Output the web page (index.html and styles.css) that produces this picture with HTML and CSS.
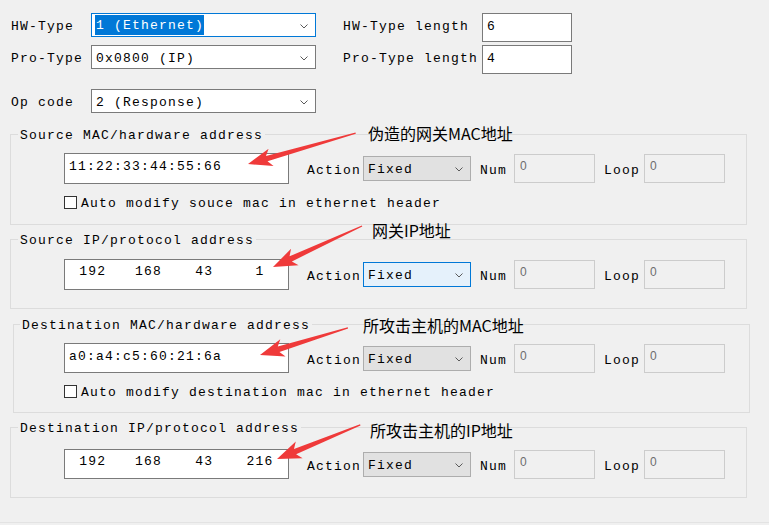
FILE: index.html
```html
<!DOCTYPE html>
<html>
<head>
<meta charset="utf-8">
<link rel="stylesheet" href="styles.css">
</head>
<body>
<div class="top">
  <div class="row">
    <span class="lbl lbl-a">HW-Type</span>
    <div class="combo focus"><span class="hl">1 (Ethernet)</span><svg class="chev" width="8" height="5" viewBox="0 0 8 5"><polyline points="0.5,0.5 4,4 7.5,0.5"/></svg></div>
    <span class="lbl lbl-b">HW-Type length</span>
    <div class="edit len">6</div>
  </div>
  <div class="row">
    <span class="lbl lbl-a">Pro-Type</span>
    <div class="combo"><span>0x0800 (IP)</span><svg class="chev" width="8" height="5" viewBox="0 0 8 5"><polyline points="0.5,0.5 4,4 7.5,0.5"/></svg></div>
    <span class="lbl lbl-b">Pro-Type length</span>
    <div class="edit len">4</div>
  </div>
  <div class="row op">
    <span class="lbl lbl-a">Op code</span>
    <div class="combo"><span>2 (Response)</span><svg class="chev" width="8" height="5" viewBox="0 0 8 5"><polyline points="0.5,0.5 4,4 7.5,0.5"/></svg></div>
  </div>
</div>

<fieldset class="grp g1">
  <legend>Source MAC/hardware address</legend>
  <div class="line">
    <div class="edit addr">11:22:33:44:55:66</div>
    <span class="act-l">Action</span>
    <div class="combo act"><span>Fixed</span><svg class="chev" width="8" height="5" viewBox="0 0 8 5"><polyline points="0.5,0.5 4,4 7.5,0.5"/></svg></div>
    <span class="num-l">Num</span>
    <div class="edit dis num">0</div>
    <span class="loop-l">Loop</span>
    <div class="edit dis loop">0</div>
  </div>
  <div class="chk"><span class="box"></span><span class="chk-t">Auto modify souce mac in ethernet header</span></div>
</fieldset>

<fieldset class="grp g2">
  <legend>Source IP/protocol address</legend>
  <div class="line">
    <div class="edit addr ip"><span>192</span><span>168</span><span>43</span><span>1</span></div>
    <span class="act-l">Action</span>
    <div class="combo act focus"><span>Fixed</span><svg class="chev" width="8" height="5" viewBox="0 0 8 5"><polyline points="0.5,0.5 4,4 7.5,0.5"/></svg></div>
    <span class="num-l">Num</span>
    <div class="edit dis num">0</div>
    <span class="loop-l">Loop</span>
    <div class="edit dis loop">0</div>
  </div>
</fieldset>

<fieldset class="grp g3">
  <legend>Destination MAC/hardware address</legend>
  <div class="line">
    <div class="edit addr">a0:a4:c5:60:21:6a</div>
    <span class="act-l">Action</span>
    <div class="combo act"><span>Fixed</span><svg class="chev" width="8" height="5" viewBox="0 0 8 5"><polyline points="0.5,0.5 4,4 7.5,0.5"/></svg></div>
    <span class="num-l">Num</span>
    <div class="edit dis num">0</div>
    <span class="loop-l">Loop</span>
    <div class="edit dis loop">0</div>
  </div>
  <div class="chk"><span class="box"></span><span class="chk-t">Auto modify destination mac in ethernet header</span></div>
</fieldset>

<fieldset class="grp g4">
  <legend>Destination IP/protocol address</legend>
  <div class="line">
    <div class="edit addr ip"><span>192</span><span>168</span><span>43</span><span>216</span></div>
    <span class="act-l">Action</span>
    <div class="combo act"><span>Fixed</span><svg class="chev" width="8" height="5" viewBox="0 0 8 5"><polyline points="0.5,0.5 4,4 7.5,0.5"/></svg></div>
    <span class="num-l">Num</span>
    <div class="edit dis num">0</div>
    <span class="loop-l">Loop</span>
    <div class="edit dis loop">0</div>
  </div>
</fieldset>

<div class="foot"></div>

<svg class="overlay" width="769" height="525" viewBox="0 0 769 525">
  <g class="arrow" transform="translate(248 164) rotate(-16)"><polygon points="0,0 24,-9 19.5,-2.8 112,-0.6 112,0.6 19.5,2.8 24,9"/></g>
  <g class="arrow" transform="translate(273 267) rotate(-24.7)"><polygon points="0,0 24,-9 19.5,-2.8 98,-0.6 98,0.6 19.5,2.8 24,9"/></g>
  <g class="arrow" transform="translate(260 355) rotate(-17.1)"><polygon points="0,0 24,-9 19.5,-2.8 92,-0.6 92,0.6 19.5,2.8 24,9"/></g>
  <g class="arrow" transform="translate(277 459) rotate(-22.3)"><polygon points="0,0 24,-9 19.5,-2.8 90,-0.6 90,0.6 19.5,2.8 24,9"/></g>
  <text class="note" x="368" y="133">伪造的网关MAC地址</text>
  <text class="note" x="372" y="230">网关IP地址</text>
  <text class="note" x="363" y="325">所攻击主机的MAC地址</text>
  <text class="note" x="370" y="430">所攻击主机的IP地址</text>
</svg>
</body>
</html>
```

FILE: styles.css
```css
* { box-sizing: border-box; }

body {
  margin: 0;
  width: 769px;
  height: 525px;
  overflow: hidden;
  position: relative;
  background: #f0f0f0;
  color: #000;
  font-family: "Liberation Mono", "Courier New", monospace;
  font-size: 13px;
  letter-spacing: 1.2px;
}

.top { padding: 13px 0 0 11px; }

.row { display: flex; align-items: flex-start; }
.row + .row { margin-top: 3px; }
.row.op { margin-top: 15px; }

.lbl { height: 24px; line-height: 24px; padding-top: 2px; white-space: nowrap; }
.lbl-a { width: 80px; }
.lbl-b { width: 139px; margin-left: 27px; }

.combo {
  width: 225px;
  height: 24px;
  border: 1px solid #7a7a7a;
  background: #fff;
  display: flex;
  align-items: center;
  justify-content: space-between;
  padding: 2px 7px 0 4px;
  white-space: nowrap;
}
.combo.focus { border-color: #0078d7; }

.hl {
  background: #0078d7;
  color: #fff;
  margin-left: -1px;
  padding-left: 1px;
}
.combo .hl { margin-top: -2px; padding-top: 1px; line-height: 19px; }

.chev { display: block; flex: none; }
.chev polyline { fill: none; stroke: #5a5a5a; stroke-width: 1; }

.edit {
  background: #fff;
  border: 1px solid #7a7a7a;
  padding: 4px 4px 0;
  line-height: 18px;
  white-space: nowrap;
}
.len { width: 90px; height: 29px; }

.grp {
  border: 1px solid #dcdcdc;
  margin: 0 22px 0 10px;
  padding: 0 7px;
  min-width: 0;
}
.grp legend { padding: 4px 2px 0; line-height: 12px; }

.g1 { margin-top: 13px; padding-top: 11px; padding-bottom: 15px; }
.g2 { margin-top: 6px; padding-top: 12px; padding-bottom: 18px; }
.g3 { margin: 7px 19px 0 13px; padding: 11px 7px 14px 6px; }
.g4 { margin-top: 6px; padding-top: 14px; padding-bottom: 18px; }

.line { display: flex; align-items: center; margin-left: 46px; }
.g3 .line, .g3 .chk { margin-left: 44px; }

.addr { width: 225px; height: 31px; flex: none; }
.g3 .addr, .g4 .addr { height: 30px; }

.ip {
  display: grid;
  grid-template-columns: repeat(4, 1fr);
  text-align: center;
  padding: 3px 0 0;
}

.act-l, .num-l, .loop-l { padding-top: 4px; white-space: nowrap; }
.act-l { margin-left: 18px; }
.combo.act {
  width: 108px;
  height: 25px;
  margin-left: 2px;
  background: #e1e1e1;
  border-color: #adadad;
  flex: none;
}
.combo.act.focus { background: #e5f1fb; border-color: #0078d7; }

.num-l { margin-left: 9px; }
.loop-l { margin-left: 9px; }

.dis {
  width: 81px;
  height: 29px;
  flex: none;
  background: #f0f0f0;
  border-color: #cccccc;
  color: #6d6d6d;
  font-family: "Liberation Sans", Arial, sans-serif;
  font-size: 12px;
  letter-spacing: 0;
  padding: 2px 5px 0;
}
.num { margin-left: 7px; }
.loop { margin-left: 4px; }

.chk {
  display: flex;
  align-items: center;
  height: 13px;
  margin-top: 12px;
  margin-left: 46px;
  white-space: nowrap;
}
.chk-t { padding-top: 2px; }
.box {
  width: 13px;
  height: 13px;
  border: 1px solid #333;
  background: #fff;
  margin-right: 4px;
  flex: none;
}

.foot { margin-top: 24px; border-top: 1px solid #e3e3e3; }

.overlay { position: absolute; left: 0; top: 0; pointer-events: none; }
.arrow polygon { fill: #ef3a3a; }
.note {
  font-family: "Noto Sans CJK SC", sans-serif;
  font-size: 16px;
  letter-spacing: 0;
  fill: #000;
  dominant-baseline: central;
}
```
